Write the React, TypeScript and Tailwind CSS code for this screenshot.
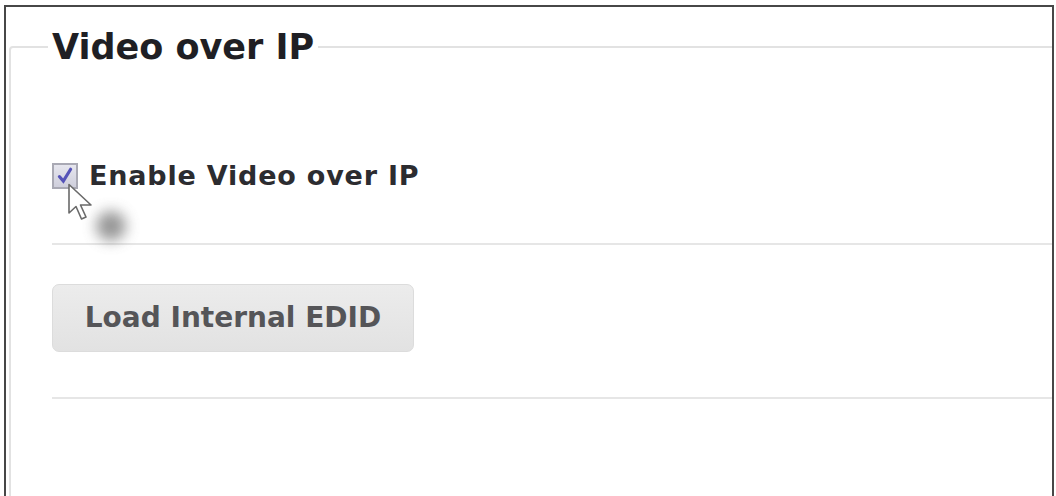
import React from 'react'

const font = { fontFamily: '"DejaVu Sans", Verdana, sans-serif' }

// Mouse pointer drawn as an outlined arrow
function Pointer() {
  return (
    <svg width="30" height="40" viewBox="0 0 30 40" className="absolute left-[67px] top-[183px]">
      <path
        d="M2 1.5 L2 30 L9 23.5 L14.5 36 L19 34 L13.5 22 L24 22 Z"
        fill="#ffffff"
        stroke="#6a6a6a"
        strokeWidth="1.6"
        strokeLinejoin="round"
      />
    </svg>
  )
}

function CheckBox() {
  return (
    <div className="w-[26px] h-[26px] shrink-0 border-2 border-[#a9a9b4] bg-gradient-to-b from-[#e6e6ee] to-[#cfcfdc] flex items-center justify-center">
      <svg width="18" height="18" viewBox="0 0 16 16">
        <path d="M3 8.5 L6.5 12.5 L13 2" fill="none" stroke="#5553b8" strokeWidth="2.8" strokeLinecap="round" />
      </svg>
    </div>
  )
}

export default function App() {
  return (
    <div className="relative w-[1056px] h-[496px] bg-white overflow-hidden" style={font}>
      <div className="ml-[4px] mt-[5px] w-[1050px] h-[491px] border-2 border-b-0 border-[#474747] overflow-hidden">
        <fieldset className="ml-[3px] mt-[20px] w-[1080px] h-[520px] border-2 border-[#e2e2e2] rounded-sm">
          <legend className="ml-[37px] px-[4px] text-[35px] leading-[40px] font-bold text-[#1f1f24]">
            Video over IP
          </legend>

          <div className="pl-[41px] pt-[94px]">
            <label className="flex items-center gap-[11px] h-[30px]">
              <CheckBox />
              <span className="text-[27px] font-bold text-[#2c2c30] tracking-[0.8px]">Enable Video over IP</span>
            </label>

            <div className="mt-[52px] h-[2px] bg-[#e6e6e6]" />

            <button className="mt-[39px] w-[362px] h-[68px] rounded-[7px] border border-[#dcdcdc] bg-gradient-to-b from-[#ececec] to-[#e2e2e2] text-[28px] font-bold text-[#555558] text-center">
              Load Internal EDID
            </button>

            <div className="mt-[45px] h-[2px] bg-[#e6e6e6]" />
          </div>
        </fieldset>
      </div>

      {/* cursor over the checkbox, with its soft click shadow */}
      <div className="absolute left-[96px] top-[211px] w-[30px] h-[30px] rounded-full bg-[#7d7d7d] blur-[7px] opacity-80" />
      <Pointer />
    </div>
  )
}
